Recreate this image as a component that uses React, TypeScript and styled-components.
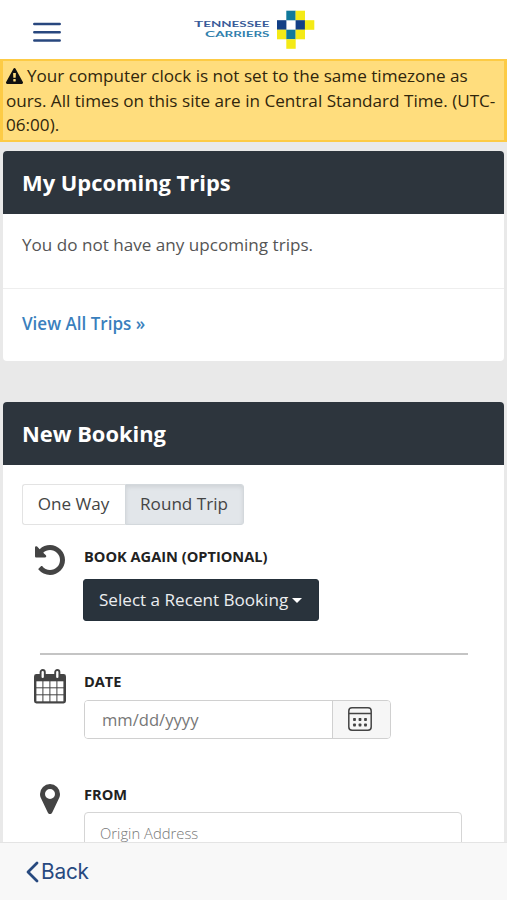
import React from "react";
import styled, { createGlobalStyle } from "styled-components";

const Global = createGlobalStyle`
  * { box-sizing: border-box; }
  html, body { margin: 0; padding: 0; overflow: hidden; }
  body { background: #e9e9e9; font-family: "Open Sans", "Noto Sans", sans-serif; color: #444; }
  button, input { font-family: inherit; }
`;

const Screen = styled.div`
  width: 507px;
  height: 900px;
  display: flex;
  flex-direction: column;
  background: #e9e9e9;
`;

const TopBar = styled.header`
  flex: none;
  height: 59px;
  background: #fff;
  display: grid;
  grid-template-columns: 161px 1fr;
  padding-left: 33px;
`;

const MenuButton = styled.button`
  width: 28px;
  height: 20px;
  margin-top: 22px;
  padding: 0;
  border: 0;
  background: none;
  display: block;
`;

const LogoArt = styled.svg`
  display: block;
  margin-top: 8px;
`;

const Alert = styled.div`
  flex: none;
  height: 83px;
  border: 2px solid #fdcb45;
  border-left-width: 3px;
  border-right-width: 3px;
  background: #ffdd7d;
  padding: 3px 3px 0;
  font-size: 17.12px;
  line-height: 24.5px;
  color: #30260c;
  white-space: nowrap;
`;

const AlertLine = styled.div``;

const WarningIcon = styled.svg`
  vertical-align: -2px;
  margin-right: 4px;
`;

const Content = styled.main`
  flex: 1;
  min-height: 0;
  overflow: hidden;
  padding: 9px 3px 0;
  display: flex;
  flex-direction: column;
  gap: 41px;
`;

const Card = styled.section`
  flex: none;
  border-radius: 4px;
  overflow: hidden;
  background: #fff;
`;

const CardTitle = styled.h2`
  margin: 0;
  height: 63px;
  padding: 0 19px;
  background: #2d353d;
  color: #fff;
  font-size: 21.9px;
  font-weight: 700;
  line-height: 64px;
`;

const CardText = styled.p`
  margin: 0;
  height: 74px;
  padding: 0 19px;
  font-size: 17.1px;
  line-height: 62px;
  color: #555;
`;

const CardFoot = styled.div`
  height: 73px;
  padding: 0 19px;
  border-top: 1px solid #eee;
  line-height: 69px;
`;

const TripsLink = styled.a`
  color: #3a7fbd;
  font-size: 17.05px;
  font-weight: 600;
  text-decoration: none;
`;

const Form = styled.div`
  height: 420px;
  padding: 19px 19px 0;
`;

const Segments = styled.div`
  display: flex;
  width: 222px;
  height: 41px;
`;

const Segment = styled.button<{ $active?: boolean }>`
  width: ${(p) => (p.$active ? 119 : 103)}px;
  padding: 0 1px 2px 0;
  border: 1px solid ${(p) => (p.$active ? "#d3d8dc" : "#e3e3e3")};
  border-right-width: ${(p) => (p.$active ? 1 : 0)}px;
  border-radius: ${(p) => (p.$active ? "0 3px 3px 0" : "3px 0 0 3px")};
  background: ${(p) => (p.$active ? "#e2e6ea" : "#fff")};
  box-shadow: ${(p) => (p.$active ? "inset 0 2px 4px rgba(0,0,0,.09)" : "none")};
  color: #444;
  font-size: 17.1px;
`;

const Field = styled.div<{ $top: number }>`
  display: grid;
  grid-template-columns: 62px 1fr;
  margin-top: ${(p) => p.$top}px;
`;

const FieldIcon = styled.div<{ $left: number; $lift?: number }>`
  margin-top: ${(p) => -(p.$lift ?? 0)}px;
  padding-left: ${(p) => p.$left}px;
  svg { display: block; }
`;

const Label = styled.div`
  height: 22px;
  color: #222;
  font-size: 14.6px;
  font-weight: 700;
  line-height: 21px;
  white-space: nowrap;
`;

const SelectButton = styled.button`
  display: flex;
  align-items: center;
  width: 236px;
  height: 42px;
  margin: 11px 0 0 -1px;
  padding: 0 0 2px 15px;
  border: 1px solid #25303a;
  border-radius: 3px;
  background: #29333c;
  color: #eceef0;
  font-size: 17.1px;
  white-space: nowrap;
`;

const Caret = styled.span`
  margin: 3px 0 0 4px;
  border: 5px solid transparent;
  border-top-color: #fff;
  border-bottom: 0;
`;

const Divider = styled.hr`
  width: 428px;
  height: 2px;
  margin: 32px 0 0 18px;
  border: 0;
  background: #c4c4c4;
`;

const InputGroup = styled.div`
  display: flex;
  width: 307px;
  height: 39px;
  margin-top: 7px;
  border: 1px solid #d0d0d0;
  border-radius: 4px;
  overflow: hidden;
`;

const DateInput = styled.input`
  width: 247px;
  padding: 0 0 1px 17px;
  border: 0;
  background: #fff;
  font-size: 16.6px;
  &::placeholder { color: #777; opacity: 1; }
`;

const PickerButton = styled.button`
  flex: 1;
  padding: 0 3px 2px 0;
  border: 0;
  border-left: 1px solid #d0d0d0;
  background: #f6f6f6;
  display: flex;
  align-items: center;
  justify-content: center;
`;

const AddressInput = styled.input`
  width: 378px;
  height: 42px;
  margin-top: 6px;
  padding: 0 15px;
  border: 1px solid #d5d5d5;
  border-radius: 4px;
  font-size: 14.8px;
  font-weight: 300;
  &::placeholder { color: #777; opacity: 1; }
`;

const BottomBar = styled.footer`
  flex: none;
  height: 58px;
  border-top: 1px solid #e4e4e4;
  background: #f8f8f8;
  padding: 0 0 0 26px;
`;

const BackButton = styled.button`
  display: flex;
  align-items: center;
  gap: 2px;
  height: 57px;
  padding: 0;
  border: 0;
  background: none;
  color: #27497f;
  font-family: Inter, Roboto, sans-serif;
  font-size: 20.8px;
  letter-spacing: -0.2px;
`;

const tiles: [number, number, string][] = [
  [1, 0, "#10799b"], [2, 0, "#f4ea16"],
  [0, 1, "#123f86"], [2, 1, "#123f86"], [3, 1, "#f4ea16"],
  [0, 2, "#f4ea16"], [1, 2, "#10799b"], [2, 2, "#f4ea16"],
  [1, 3, "#f4ea16"],
];

function Logo() {
  return (
    <LogoArt width="124" height="44" viewBox="0 0 124 44" role="img" aria-label="Tennessee Carriers">
      <g fontFamily="Lato, sans-serif" fontWeight="700">
        <text x="0" y="19" fontSize="8.4" fill="#385a98" textLength="75.5" lengthAdjust="spacingAndGlyphs">
          T<tspan fontSize="7.3">ENNESSEE</tspan>
        </text>
        <text x="11" y="29.1" fontSize="8.4" fill="#327fad" textLength="64.5" lengthAdjust="spacingAndGlyphs">
          C<tspan fontSize="7.3">ARRIERS</tspan>
        </text>
      </g>
      {tiles.map(([x, y, fill]) => (
        <rect key={`${x}-${y}`} x={83 + x * 9.3} y={2.7 + y * 9.5} width="9.4" height="9.6" fill={fill} />
      ))}
    </LogoArt>
  );
}

function Undo() {
  return (
    <svg width="30" height="30" viewBox="128 128 1536 1536" fill="#444">
      <path d="M1664 896q0 156-61 298t-164 245-245 164-298 61q-172 0-327-72.5t-264-204.5q-7-10-6.5-22.5t8.5-20.5l137-138q10-9 25-9 16 2 23 12 73 95 179 147t225 52q104 0 198.5-40.5t163.5-109.5 109.5-163.5 40.5-198.5-40.5-198.5-109.5-163.5-163.5-109.5-198.5-40.5q-98 0-188 35.5t-160 101.5l137 138q31 30 14 69-17 40-59 40h-448q-26 0-45-19t-19-45v-448q0-42 40-59 39-17 69 14l130 129q107-101 244.5-156.5t284.5-55.5q156 0 298 61t245 164 164 245 61 298z" />
    </svg>
  );
}

function Calendar() {
  return (
    <svg width="32" height="35" viewBox="0 0 32 35">
      <rect x="0" y="5" width="32" height="29.5" rx="2.4" fill="#444" />
      {[0, 1, 2].map((r) =>
        [0, 1, 2, 3].map((c) => (
          <rect key={`${r}${c}`} x={2.4 + c * 7} y={12.3 + r * 7} width="6" height="6" fill="#fff" />
        ))
      )}
      <rect x="6.6" y="1" width="4.2" height="9" rx="2.1" fill="#fff" stroke="#444" strokeWidth="1.9" />
      <rect x="21.2" y="1" width="4.2" height="9" rx="2.1" fill="#fff" stroke="#444" strokeWidth="1.9" />
    </svg>
  );
}

function Marker() {
  return (
    <svg width="20" height="30" viewBox="384 128 1024 1536" fill="#444">
      <path d="M1152 640q0-106-75-181t-181-75-181 75-75 181 75 181 181 75 181-75 75-181zm256 0q0 109-33 179l-364 774q-16 33-47.5 52t-67.5 19-67.5-19-46.5-52l-365-774q-33-70-33-179 0-212 150-362t362-150 362 150 150 362z" />
    </svg>
  );
}

function PickerIcon() {
  return (
    <svg width="24" height="24" viewBox="0 0 24 24" fill="none" stroke="#444" strokeWidth="1.5">
      <rect x="0.8" y="0.8" width="22.4" height="22.4" rx="3.2" />
      <path d="M1 6.5H23" />
      {[12.5, 18].map((y) =>
        [6.5, 12, 17.5].map((x) => (
          <rect key={`${x}-${y}`} x={x - 1.4} y={y - 1.4} width="2.8" height="2.8" rx="0.7" fill="#444" stroke="none" />
        ))
      )}
    </svg>
  );
}

export default function App() {
  return (
    <>
      <Global />
      <Screen>
        <TopBar>
          <MenuButton aria-label="Menu">
            <svg width="28" height="20" viewBox="0 0 28 20" stroke="#28477e" strokeWidth="2.5" strokeLinecap="round">
              <path d="M1.3 2H26.7M1.3 10.3H26.7M1.3 18.5H26.7" />
            </svg>
          </MenuButton>
          <Logo />
        </TopBar>
        <Alert>
          <AlertLine>
            <WarningIcon width="17" height="16" viewBox="0 0 1792 1664" fill="#111">
              <path d="M1024 1375v-190q0-14-9.5-23.5t-22.5-9.5h-192q-13 0-22.5 9.5t-9.5 23.5v190q0 14 9.5 23.5t22.5 9.5h192q13 0 22.5-9.5t9.5-23.5zm-2-374l18-459q0-12-10-19-13-11-24-11h-220q-11 0-24 11-10 7-10 21l17 457q0 10 10 16.5t24 6.5h185q14 0 23.5-6.5t10.5-16.5zm-14-934l768 1408q35 63-2 126-17 29-46.5 46t-63.5 17h-1536q-34 0-63.5-17t-46.5-46q-37-63-2-126l768-1408q17-31 47-49t65-18 65 18 47 49z" />
            </WarningIcon>
            Your computer clock is not set to the same timezone as
          </AlertLine>
          <AlertLine>ours. All times on this site are in Central Standard Time. (UTC-</AlertLine>
          <AlertLine>06:00).</AlertLine>
        </Alert>
        <Content>
          <Card>
            <CardTitle>My Upcoming Trips</CardTitle>
            <CardText>You do not have any upcoming trips.</CardText>
            <CardFoot><TripsLink>View All Trips »</TripsLink></CardFoot>
          </Card>
          <Card>
            <CardTitle>New Booking</CardTitle>
            <Form>
              <Segments>
                <Segment>One Way</Segment>
                <Segment $active>Round Trip</Segment>
              </Segments>
              <Field $top={21}>
                <FieldIcon $left={13} $lift={1}><Undo /></FieldIcon>
                <div>
                  <Label>BOOK AGAIN (OPTIONAL)</Label>
                  <SelectButton>Select a Recent Booking<Caret /></SelectButton>
                </div>
              </Field>
              <Divider />
              <Field $top={16}>
                <FieldIcon $left={12} $lift={2}><Calendar /></FieldIcon>
                <div>
                  <Label>DATE</Label>
                  <InputGroup>
                    <DateInput placeholder="mm/dd/yyyy" />
                    <PickerButton aria-label="Open calendar"><PickerIcon /></PickerButton>
                  </InputGroup>
                </div>
              </Field>
              <Field $top={45}>
                <FieldIcon $left={18} $lift={0}><Marker /></FieldIcon>
                <div>
                  <Label>FROM</Label>
                  <AddressInput placeholder="Origin Address" />
                </div>
              </Field>
            </Form>
          </Card>
        </Content>
        <BottomBar>
          <BackButton>
            <svg width="13" height="22" viewBox="0 0 13 22" fill="none" stroke="#27497f" strokeWidth="2.8" strokeLinecap="round" strokeLinejoin="round">
              <path d="M11 2L2 11L11 20" />
            </svg>
            Back
          </BackButton>
        </BottomBar>
      </Screen>
    </>
  );
}
